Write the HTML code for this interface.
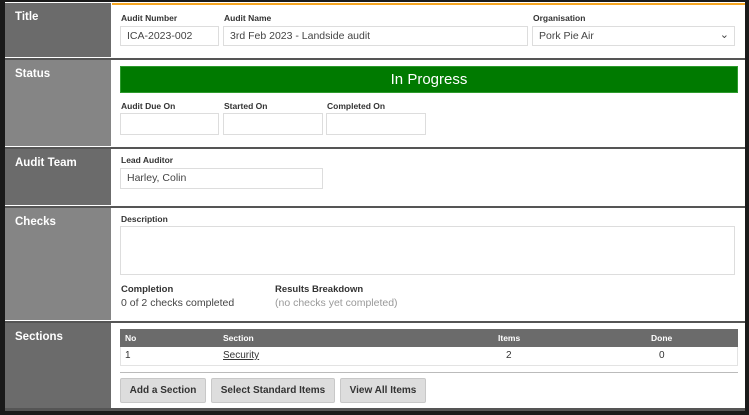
<!DOCTYPE html>
<html><head><style>
body{margin:0;width:749px;height:415px;background:#1a1a1a;position:relative;overflow:hidden;font-family:"Liberation Sans",Arial,sans-serif}
.a{position:absolute}
.lc{position:absolute;left:5px;width:106px;color:#fff;font-weight:bold;font-size:11.5px;padding:8px 0 0 10px;box-sizing:border-box}
.d{background:#6b6b6b}.l{background:#858585}
.lab{position:absolute;font-size:8.5px;font-weight:bold;color:#333}
.in{position:absolute;border:1px solid #ddd;background:#fff;height:20px;box-sizing:border-box;font-size:10.5px;color:#444;padding:3px 6px}
.sep{position:absolute;left:5px;width:740px;height:3px;background:linear-gradient(#fff 0,#fff 1px,#555 1px,#555 3px)}
.btn{position:absolute;top:378px;height:25px;background:#ddd;border:1px solid #c8c8c8;border-radius:2px;font-size:10px;font-weight:bold;color:#333;text-align:center;line-height:24px;box-sizing:border-box}
</style></head><body>
<div class="a" style="left:5px;top:2px;width:740px;height:408px;background:#fff"></div>
<div class="a" style="left:112px;top:3px;width:633px;height:2px;background:#f5a623"></div>
<div class="a" style="left:111px;top:2px;width:1px;height:408px;background:#fff"></div>

<div class="lc d" style="top:3px;height:55px">Title</div>
<div class="sep" style="top:57px"></div>
<div class="lc l" style="top:60px;height:86px">Status</div>
<div class="sep" style="top:146px"></div>
<div class="lc d" style="top:149px;height:57px">Audit Team</div>
<div class="sep" style="top:205px"></div>
<div class="lc l" style="top:208px;height:113px">Checks</div>
<div class="sep" style="top:320px"></div>
<div class="lc d" style="top:323px;height:87px">Sections</div>
<div class="sep" style="top:408px;background:#555"></div>

<div class="lab" style="left:121px;top:13px">Audit Number</div>
<div class="in" style="left:120px;top:26px;width:99px">ICA-2023-002</div>
<div class="lab" style="left:224px;top:13px">Audit Name</div>
<div class="in" style="left:223px;top:26px;width:305px">3rd Feb 2023 - Landside audit</div>
<div class="lab" style="left:533px;top:13px">Organisation</div>
<div class="in" style="left:532px;top:26px;width:203px">Pork Pie Air<span style="position:absolute;right:5px;top:1px;font-size:11px">&#8964;</span></div>

<div class="a" style="left:120px;top:66px;width:618px;height:27px;background:#007a00;border:1px solid #2e9a2e;box-sizing:border-box;color:#fff;font-size:15px;text-align:center;line-height:26px">In Progress</div>
<div class="lab" style="left:121px;top:101px">Audit Due On</div>
<div class="in" style="left:120px;top:113px;width:99px;height:22px"></div>
<div class="lab" style="left:224px;top:101px">Started On</div>
<div class="in" style="left:223px;top:113px;width:100px;height:22px"></div>
<div class="lab" style="left:327px;top:101px">Completed On</div>
<div class="in" style="left:326px;top:113px;width:100px;height:22px"></div>

<div class="lab" style="left:121px;top:155px">Lead Auditor</div>
<div class="in" style="left:120px;top:168px;width:203px;height:21px">Harley, Colin</div>

<div class="lab" style="left:121px;top:214px">Description</div>
<div class="in" style="left:120px;top:226px;width:615px;height:49px"></div>
<div class="a" style="left:121px;top:284px;font-size:9.5px;font-weight:bold;color:#333">Completion</div>
<div class="a" style="left:121px;top:297px;font-size:10.5px;color:#444">0 of 2 checks completed</div>
<div class="a" style="left:275px;top:284px;font-size:9.5px;font-weight:bold;color:#333">Results Breakdown</div>
<div class="a" style="left:275px;top:297px;font-size:10.5px;color:#999">(no checks yet completed)</div>

<div class="a" style="left:120px;top:329px;width:618px;height:18px;background:#6b6b6b;color:#fff;font-size:8.5px;font-weight:bold;line-height:18px">
<span class="a" style="left:5px">No</span><span class="a" style="left:103px">Section</span><span class="a" style="left:378px">Items</span><span class="a" style="left:531px">Done</span></div>
<div class="a" style="left:120px;top:347px;width:618px;height:19px;border:1px solid #e3e3e3;border-top:0;box-sizing:border-box;font-size:10px;color:#333;line-height:18px">
<span class="a" style="left:4px">1</span><span class="a" style="left:102px;text-decoration:underline">Security</span><span class="a" style="left:385px">2</span><span class="a" style="left:538px">0</span></div>
<div class="a" style="left:120px;top:372px;width:618px;height:1px;background:#bbb"></div>
<div class="btn" style="left:120px;width:86px">Add a Section</div>
<div class="btn" style="left:211px;width:124px">Select Standard Items</div>
<div class="btn" style="left:340px;width:86px">View All Items</div>
</body></html>
